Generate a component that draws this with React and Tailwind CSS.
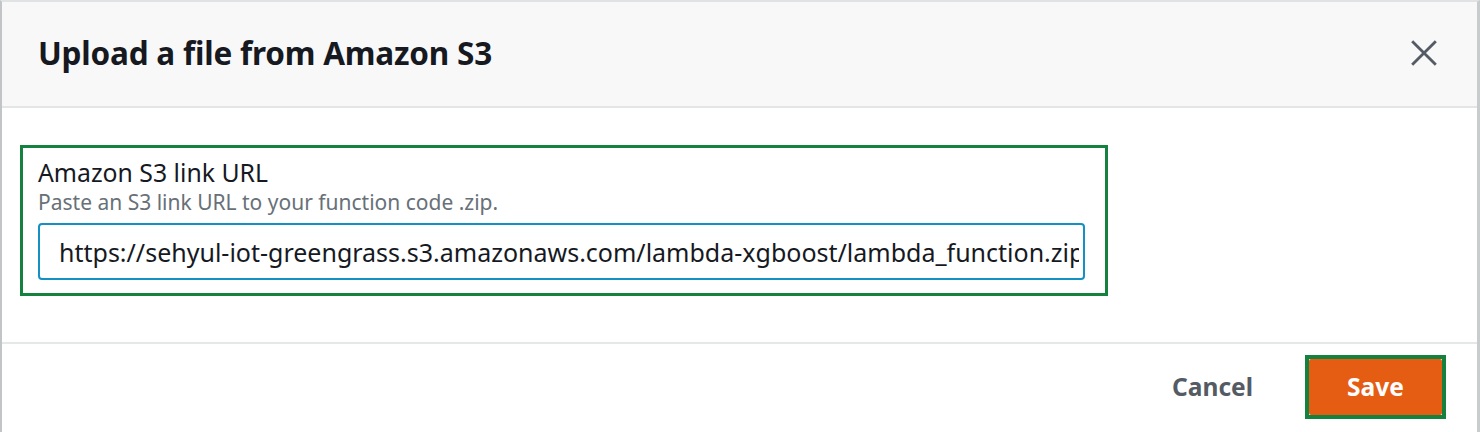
import React from "react";

export default function App() {
  const font = { fontFamily: '"Noto Sans", "Open Sans", Arial, sans-serif' };
  return (
    <div className="w-[1480px] h-[432px] overflow-hidden bg-white" style={font}>
      <div className="h-full flex flex-col border-t-2 border-t-[#dfe3e4] border-l-2 border-l-[#c2c5c7] border-r-[3px] border-r-[#c9cccd] bg-white">
        <div className="h-[106px] shrink-0 flex items-center justify-between bg-[#f8f8f8] border-b-2 border-[#e3e6e6] pl-[36px] pr-[40px]">
          <h1 className="text-[31.5px] font-bold text-[#16191f] tracking-[-0.2px] leading-none pb-[2px]">
            Upload a file from Amazon S3
          </h1>
          <svg width="26" height="26" viewBox="0 0 24 24" className="mb-[2px]">
            <path d="M2 2 L22 22 M22 2 L2 22" stroke="#545b64" strokeWidth="2.6" strokeLinecap="square" />
          </svg>
        </div>
        <div className="h-[236px] shrink-0 border-b-2 border-[#e5e8e8] pt-[37px] pl-[18px]">
          <div className="w-[1088px] h-[151px] border-[3px] border-[#15813f] pl-[15px] pr-[22px] pt-[8px]">
            <div className="text-[24.8px] leading-[32px] text-[#16191f]">Amazon S3 link URL</div>
            <div className="text-[21px] leading-[29px] text-[#687078] mt-[0px]">
              Paste an S3 link URL to your function code .zip.
            </div>
            <input
              readOnly
              value="https://sehyul-iot-greengrass.s3.amazonaws.com/lambda-xgboost/lambda_function.zip"
              className="mt-[6px] w-[1047px] h-[57px] border-2 border-[#1590c3] rounded-[4px] pl-[19px] pr-[4px] text-[25px] text-[#16191f] outline-none bg-white"
              style={font}
            />
          </div>
        </div>
        <div className="flex-1 flex items-center justify-end pr-[31px] pb-[2px]">
          <button className="text-[24.5px] font-bold text-[#545b64] mr-[52px] leading-none" style={font}>
            Cancel
          </button>
          <div className="border-[4px] border-[#15813f] p-0">
            <button
              className="w-[133px] h-[56px] bg-[#e55d13] rounded-[2px] text-white text-[24.5px] font-bold leading-none"
              style={font}
            >
              Save
            </button>
          </div>
        </div>
      </div>
    </div>
  );
}
